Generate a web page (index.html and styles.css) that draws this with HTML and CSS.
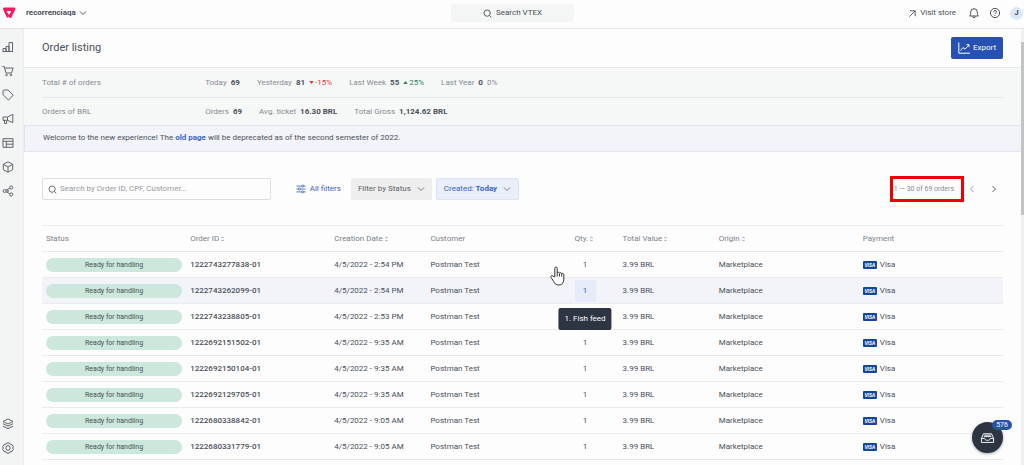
FILE: index.html
```html
<!DOCTYPE html>
<html lang="en">
<head>
<meta charset="utf-8">
<meta name="viewport" content="width=device-width, initial-scale=1">
<title>Order listing</title>
<link rel="stylesheet" href="styles.css">
</head>
<body>
<svg class="symbols" aria-hidden="true">
  <symbol id="chevron" viewBox="0 0 8 8"><path d="M1 2.5 4 5.5 7 2.5"/></symbol>
  <symbol id="magnifier" viewBox="0 0 10 10"><circle cx="4.6" cy="4.6" r="3.5"/><path d="M7.1 7.1 9.2 9.2"/></symbol>
  <symbol id="sort" viewBox="0 0 4 8"><path d="M.5 3 2 1.2 3.5 3M.5 5 2 6.8 3.5 5"/></symbol>
</svg>
<div class="app">
  <header class="topbar">
    <div class="topbar-side">
      <a class="logo" href="#" aria-label="VTEX home">
        <svg viewBox="0 0 14 12"><path fill="#f71963" fill-rule="evenodd" d="M2.2.6h10.2c.9 0 1.4.9 1 1.7L9.4 10.400c-.4.9-1.600.9-2 0L6.900 9.400 6.300 10.500c-.3.5-1 .5-1.300-.1L3.800 8.200 1.100 2.200C.700 1.400 1.300.600 2.200.600ZM5.300 4.100c-.4 0-.5.3-.3.600l1.600 2.900c.2.300.5.300.7 0l1.600-2.900c.2-.3 0-.6-.3-.6Z"/></svg>
      </a>
      <button class="account" type="button">recorrenciaqa <svg class="icon-small"><use href="#chevron"/></svg></button>
    </div>
    <button class="global-search" type="button"><svg class="icon-search"><use href="#magnifier"/></svg>Search VTEX</button>
    <div class="topbar-side topbar-end">
      <a class="visit" href="#"><svg class="icon-search" viewBox="0 0 10 10"><path d="M2 2h6v6M8 2 1.500 8.500"/></svg>Visit store</a>
      <button class="plain" type="button" aria-label="Notifications"><svg class="icon" viewBox="0 0 12 12"><path d="M1.600 9h8.800C9.400 8 9.300 7 9.300 5A3.300 3.300 0 0 0 2.700 5c0 2-.1 3-1.100 4ZM4.500 9.300c.2 1.900 2.800 1.900 3 0"/></svg></button>
      <button class="plain" type="button" aria-label="Help"><svg class="icon" viewBox="0 0 12 12"><circle cx="6" cy="6" r="4.600"/><path d="M4.600 4.900c0-1.900 2.900-1.700 2.900 0 0 1-1.500 1-1.500 2M6 8v.8"/></svg></button>
      <button class="avatar" type="button">J</button>
    </div>
  </header>

  <nav class="sidebar" aria-label="Modules">
    <div class="nav-group">
      <a href="#" aria-label="Dashboards"><svg viewBox="0 0 12 12"><path d="M1 10.500V7.500h3v3M4 10.500v-5h3v5M7 10.500v-9h3.500v9M.5 10.500h10.500"/></svg></a>
      <a href="#" aria-label="Orders"><svg viewBox="0 0 12 12"><path d="M.500 1.500h1.700L4 8h5.500L11.200 3H2.700"/><circle cx="4.500" cy="10" r=".8"/><circle cx="9" cy="10" r=".8"/></svg></a>
      <a href="#" aria-label="Products"><svg viewBox="0 0 12 12"><path d="M1 1.800 1.800 1H6l5.200 5.200-4.700 4.900L1 5.700Z"/><path d="M3.500 3.500h.3"/></svg></a>
      <a href="#" aria-label="Promotions"><svg viewBox="0 0 12 12"><path d="M1 4h4.500L10.800 1.300v8.400L5.500 7.300H1ZM5.500 4v3.300M2.500 7.300v3.200h2.200V7.300"/></svg></a>
      <a href="#" aria-label="Storefront"><svg viewBox="0 0 12 12"><path d="M1 1.700h10v8.600H1ZM1 4.300h10M4.300 4.300v6M4.300 7.200H11"/></svg></a>
      <a href="#" aria-label="Shipping"><svg viewBox="0 0 12 12"><path d="M6 .8 10.700 3.300v5.400L6 11.200 1.300 8.700V3.300ZM1.300 3.300 6 5.900l4.700-2.600M6 5.900v5.300"/></svg></a>
      <a href="#" aria-label="Integrations"><svg viewBox="0 0 12 12"><circle cx="2.600" cy="6" r="1.500"/><circle cx="9.200" cy="2.500" r="1.600"/><circle cx="9.200" cy="9.500" r="1.600"/><circle cx="6" cy="6" r=".6"/><path d="M4 5.300 7.800 3.300M4 6.700l3.800 2"/></svg></a>
    </div>
    <div class="nav-group">
      <a href="#" aria-label="Apps"><svg viewBox="0 0 12 12"><path d="M6 1 11 3.500 6 6 1 3.500ZM1 5.700l5 2.500 5-2.500M1 8.200l5 2.500 5-2.500"/></svg></a>
      <a href="#" aria-label="Settings"><svg viewBox="0 0 12 12"><path d="M4.500 1h3l.8 1.500 1.700.2L11.400 5 10.600 6l.8 1.200L10 9.400l-1.700.1L7.500 11h-3l-.8-1.500L2 9.400.6 7.200 1.400 6 .6 5 2 2.700l1.700-.2Z"/><path d="M4.800 3.800h2.400L8.400 6 7.200 8.200H4.800L3.600 6Z"/></svg></a>
    </div>
  </nav>

  <main class="main">
    <div class="page-head">
      <h1>Order listing</h1>
      <button class="export" type="button"><svg viewBox="0 0 12 12"><path d="M.800.500v10.700H12M2.500 8.500 5 5.500l2 1.700 3.700-4M8.500 2.700h2.500v2.500"/></svg>Export</button>
    </div>

    <section class="totals">
      <div class="totals-row">
        <span class="totals-name">Total # of orders</span>
        <span class="stat">Today <b>69</b></span>
        <span class="stat">Yesterday <b>81</b> <span class="delta down"><svg viewBox="0 0 6 4"><path d="M0 0h6L3 4Z"/></svg>-15%</span></span>
        <span class="stat">Last Week <b>55</b> <span class="delta up"><svg viewBox="0 0 6 4"><path d="M0 4h6L3 0Z"/></svg>25%</span></span>
        <span class="stat">Last Year <b>0</b> <span>0%</span></span>
      </div>
      <div class="totals-row">
        <span class="totals-name">Orders of BRL</span>
        <span class="stat">Orders <b>69</b></span>
        <span class="stat">Avg. ticket <b>16.30 BRL</b></span>
        <span class="stat">Total Gross <b>1,124.62 BRL</b></span>
      </div>
    </section>

    <p class="notice">Welcome to the new experience! The <a href="#">old page</a> will be deprecated as of the second semester of 2022.</p>

    <div class="toolbar">
      <label class="search"><svg class="icon-search"><use href="#magnifier"/></svg><input type="text" aria-label="Search orders" placeholder="Search by Order ID, CPF, Customer..."></label>
      <button class="all-filters" type="button"><svg viewBox="0 0 12 12"><path d="M.500 2.500h6M9.500 2.500h2M.500 6h2M5.500 6h6M.500 9.500h6M9.500 9.500h2"/><circle cx="8" cy="2.500" r="1.300"/><circle cx="4" cy="6" r="1.300"/><circle cx="8" cy="9.500" r="1.300"/></svg>All filters</button>
      <div class="chips">
        <button class="chip" type="button">Filter by Status <svg class="icon-small"><use href="#chevron"/></svg></button>
        <button class="chip chip-active" type="button"><span>Created: <b>Today</b></span> <svg class="icon-small"><use href="#chevron"/></svg></button>
      </div>
      <div class="pager">
        <span class="pager-count">1 — 30 of 69 orders</span>
        <button class="plain" type="button" aria-label="Previous page"><svg class="icon-small prev"><use href="#chevron"/></svg></button>
        <button class="plain" type="button" aria-label="Next page"><svg class="icon-small next"><use href="#chevron"/></svg></button>
      </div>
    </div>

    <div class="table-wrap">
    <table class="orders">
      <colgroup><col class="w3"><col class="w3"><col class="w2"><col class="w3"><col class="w1"><col class="w2"><col class="w3"><col class="w3"></colgroup>
      <thead>
        <tr><th>Status</th><th>Order ID <svg class="sort"><use href="#sort"/></svg></th><th>Creation Date <svg class="sort"><use href="#sort"/></svg></th><th>Customer</th><th>Qty. <svg class="sort"><use href="#sort"/></svg></th><th>Total Value <svg class="sort"><use href="#sort"/></svg></th><th>Origin <svg class="sort"><use href="#sort"/></svg></th><th>Payment</th></tr>
      </thead>
      <tbody>
        <tr><td><span class="status">Ready for handling</span></td><td class="order-id">1222743277838-01</td><td>4/5/2022 - 2:54 PM</td><td>Postman Test</td><td><span class="qty">1</span></td><td>3.99 BRL</td><td>Marketplace</td><td><span class="pay"><span class="visa">VISA</span>Visa</span></td></tr>
        <tr class="hover"><td><span class="status">Ready for handling</span></td><td class="order-id">1222743262099-01</td><td>4/5/2022 - 2:54 PM</td><td>Postman Test</td><td><span class="qty">1<span class="tooltip" role="tooltip">1. Fish feed</span></span></td><td>3.99 BRL</td><td>Marketplace</td><td><span class="pay"><span class="visa">VISA</span>Visa</span></td></tr>
        <tr><td><span class="status">Ready for handling</span></td><td class="order-id">1222743238805-01</td><td>4/5/2022 - 2:53 PM</td><td>Postman Test</td><td></td><td>3.99 BRL</td><td>Marketplace</td><td><span class="pay"><span class="visa">VISA</span>Visa</span></td></tr>
        <tr><td><span class="status">Ready for handling</span></td><td class="order-id">1222692151502-01</td><td>4/5/2022 - 9:35 AM</td><td>Postman Test</td><td><span class="qty">1</span></td><td>3.99 BRL</td><td>Marketplace</td><td><span class="pay"><span class="visa">VISA</span>Visa</span></td></tr>
        <tr><td><span class="status">Ready for handling</span></td><td class="order-id">1222692150104-01</td><td>4/5/2022 - 9:35 AM</td><td>Postman Test</td><td><span class="qty">1</span></td><td>3.99 BRL</td><td>Marketplace</td><td><span class="pay"><span class="visa">VISA</span>Visa</span></td></tr>
        <tr><td><span class="status">Ready for handling</span></td><td class="order-id">1222692129705-01</td><td>4/5/2022 - 9:35 AM</td><td>Postman Test</td><td><span class="qty">1</span></td><td>3.99 BRL</td><td>Marketplace</td><td><span class="pay"><span class="visa">VISA</span>Visa</span></td></tr>
        <tr><td><span class="status">Ready for handling</span></td><td class="order-id">1222680338842-01</td><td>4/5/2022 - 9:05 AM</td><td>Postman Test</td><td><span class="qty">1</span></td><td>3.99 BRL</td><td>Marketplace</td><td><span class="pay"><span class="visa">VISA</span>Visa</span></td></tr>
        <tr><td><span class="status">Ready for handling</span></td><td class="order-id">1222680331779-01</td><td>4/5/2022 - 9:05 AM</td><td>Postman Test</td><td><span class="qty">1</span></td><td>3.99 BRL</td><td>Marketplace</td><td><span class="pay"><span class="visa">VISA</span>Visa</span></td></tr>
      </tbody>
    </table>
    <svg class="pointer" viewBox="0 0 15 20" aria-hidden="true"><path d="M4.800 11V2.300c0-1.700 2.400-1.700 2.400 0V7c.2-1.200 2.300-1 2.300.3.300-1 2.200-.8 2.200.5.400-.8 2.100-.5 2.100.9v4.500c0 3.500-1.800 5.800-5.100 5.800-2.800 0-4-1.300-5-3.400L1 11.300c-.7-1.500 1.100-2.400 2-1.200ZM7.200 7v3.500M9.500 7.500v3M11.700 8v2.500"/></svg>
    </div>
  </main>

  <div class="scrollbar" aria-hidden="true"><div class="thumb"></div></div>

  <button class="inbox" type="button" aria-label="Inbox">
    <svg viewBox="0 0 16 12"><path d="M1.500 6.500 3.700 1.500h8.600l2.200 5v4.200h-13ZM1.500 6.500H5c.5 2.700 5.500 2.700 6 0h3.500M4 4.500h8M4.500 3h7"/></svg>
    <span class="badge">576</span>
  </button>
</div>
</body>
</html>
```
FILE: styles.css
```css
* { box-sizing: border-box; }

body {
  margin: 0;
  font: 8px/12px Roboto, "Liberation Sans", Arial, sans-serif;
  color: #4a5058;
  background: #fdfdfd;
}

button, input { font: inherit; color: inherit; border: 0; background: none; padding: 0; margin: 0; }
a { color: inherit; text-decoration: none; }
svg { fill: none; stroke: currentColor; stroke-width: 1; flex: none; display: block; }
.symbols { display: none; }

.app {
  position: relative;
  display: grid;
  grid-template: auto 1fr / 24px 1fr 3px;
  height: 100vh;
  overflow: hidden;
}

.icon { width: 12px; height: 12px; }
.icon-search { width: 9px; height: 9px; }
.icon-small { width: 8px; height: 8px; }

/* Top bar */
.topbar {
  grid-column: 1 / -1;
  display: flex;
  align-items: center;
  height: 29px;
  padding: 0 1px 2px 2px;
  border-bottom: 1px solid #e4e6e6;
}
.topbar-side { flex: 1; display: flex; align-items: center; gap: 10px; }
.topbar-end { justify-content: flex-end; gap: 9px; }
.logo svg { width: 14px; height: 12px; stroke: none; }
.account { display: flex; align-items: center; gap: 3px; font-weight: bold; }
.global-search {
  display: flex;
  align-items: center;
  justify-content: center;
  gap: 4px;
  width: 12%;
  height: 18px;
  border-radius: 2px;
  background: #f4f6f6;
}
.visit { display: flex; align-items: center; gap: 3px; margin-right: 3px; }
.avatar { width: 13px; height: 13px; border-radius: 50%; background: #d9e9f7; font-weight: bold; }

/* Sidebar */
.sidebar {
  display: flex;
  flex-direction: column;
  justify-content: space-between;
  padding: 12px 2px 11px;
  background: #f3f5f5;
  border-right: 1px solid #eceeee;
}
.nav-group { display: flex; flex-direction: column; gap: 12px; color: #5f656c; }
.nav-group svg { width: 12px; height: 12px; }

/* Page header and totals */
.main { min-width: 0; overflow: hidden; }
.page-head {
  display: flex;
  align-items: center;
  justify-content: space-between;
  height: 38px;
  padding: 0 18px;
}
h1 { margin: 0; font-size: 11px; line-height: 16px; font-weight: normal; }
.export {
  display: flex;
  align-items: center;
  gap: 3px;
  height: 22px;
  padding: 0 7px;
  border-radius: 2px;
  background: #2750b3;
  color: #fff;
}
.export svg { width: 12px; height: 12px; }

.totals { padding: 0 18px; background: #f6f8f8; border-top: 1px solid #e8eaea; color: #858b92; }
.totals-row { display: flex; align-items: center; gap: 17px; height: 29px; }
.totals-row + .totals-row { border-top: 1px solid #e6e8e8; }
.totals-name { width: 15%; margin-right: 2px; }
.stat { display: flex; gap: 4px; white-space: nowrap; }
.stat b { color: #4a5058; }
.delta { display: flex; align-items: center; gap: 1px; }
.delta svg { width: 5px; height: 3px; stroke: none; fill: currentColor; }
.down { color: #d33b3b; }
.up { color: #2f805e; }

.notice {
  margin: -1px 0 0;
  padding: 6px 18px 7px;
  border: 1px solid #dfe3f3;
  border-right: 0;
  background: #f3f4fa;
}
.notice a { color: #3a63c4; font-weight: bold; }

/* Filters */
.toolbar { display: flex; align-items: center; padding: 26px 18px 25px; color: #5b6067; }
.search {
  display: flex;
  align-items: center;
  gap: 3px;
  width: 23.8%;
  height: 22px;
  padding: 0 5px;
  border: 1px solid #dcdfe1;
  border-radius: 2px;
}
.search input { flex: 1; min-width: 0; outline: 0; }
.search input::placeholder { color: #969ba0; opacity: 1; }
.all-filters { display: flex; align-items: center; gap: 4px; margin: 0 10px 0 25px; color: #3a63c4; }
.all-filters svg { width: 10px; height: 10px; }
.chips { display: flex; gap: 4px; }
.chip {
  display: flex;
  align-items: center;
  gap: 6px;
  height: 22px;
  padding: 0 7px;
  border-radius: 2px;
  background: #efeeef;
}
.chip-active { border: 1px solid #dbe3f5; background: #e9eef9; color: #3a63c4; }
.chip .icon-small { color: #757b84; }
.pager { display: flex; align-items: center; gap: 14px; margin-left: auto; padding-right: 5px; }
.pager-count {
  padding: 4px 7px 4px 1px;
  margin: -3px -10px -3px 0;
  border: 3px solid #f00000;
  font-size: 7px;
  line-height: 12px;
  color: #858b92;
}
.pager .plain:first-of-type { color: #9ba0a6; }
.prev { transform: rotate(90deg); }
.next { transform: rotate(-90deg); }

/* Orders table */
.table-wrap { position: relative; padding: 0 18px; }
.orders { width: 100%; table-layout: fixed; border-collapse: collapse; }
.w1 { width: 5%; }
.w2 { width: 10%; }
.w3 { width: 15%; }
.orders th, .orders td {
  height: 26px;
  padding: 0 4px;
  text-align: left;
  white-space: nowrap;
  border-bottom: 1px solid #e9ebec;
}
.orders th { font-weight: normal; color: #7b8188; border-top: 1px solid #e9ebec; }
.sort { display: inline-block; width: 3px; height: 6px; vertical-align: -1px; }
.hover { background: #f2f4fa; }
.orders .order-id { font-weight: 500; }
.status {
  display: block;
  border-radius: 7px;
  background: #cce7db;
  font-size: 7px;
  line-height: 14px;
  text-align: center;
}
.qty { position: relative; display: block; width: 21px; line-height: 22px; border-radius: 2px; text-align: center; }
.hover .qty { background: #e5ebf8; color: #3a63c4; }
.tooltip {
  position: absolute;
  z-index: 1;
  top: 28px;
  left: 50%;
  transform: translateX(-50%);
  padding: 0 6px;
  border-radius: 2px;
  background: #2d3442;
  color: #fff;
}
.pay { display: flex; align-items: center; gap: 3px; }
.visa {
  width: 14px;
  border-radius: 1px;
  background: #14479b;
  color: #fff;
  font-size: 5px;
  line-height: 8px;
  font-weight: bold;
  font-style: italic;
  text-align: center;
}
.pointer { position: absolute; left: 526px; top: 41px; width: 15px; height: 20px; fill: #fff; color: #333; }

/* Scrollbar and inbox */
.scrollbar { background: #f1f1f1; padding-top: 13px; }
.thumb { height: 41%; background: #c1c3c4; }
.inbox {
  position: absolute;
  right: 21px;
  bottom: 12px;
  display: grid;
  place-items: center;
  width: 31px;
  height: 31px;
  border-radius: 50%;
  background: #2d3442;
  color: #fff;
  box-shadow: 0 1px 3px #0005;
}
.inbox svg { width: 15px; height: 12px; }
.badge {
  position: absolute;
  top: -2px;
  right: -9px;
  padding: 0 4px;
  border-radius: 5px;
  background: #2750b3;
  font-size: 7px;
  line-height: 10px;
}
```
